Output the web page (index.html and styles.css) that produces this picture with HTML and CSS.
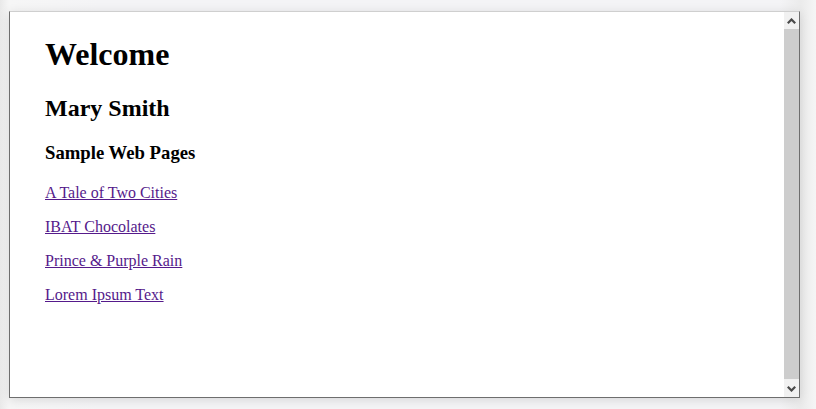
FILE: index.html
```html
<!DOCTYPE html>
<html>
<head>
<meta charset="utf-8">
<title>Welcome</title>
<link rel="stylesheet" href="styles.css">
</head>
<body>
<div class="frame">
  <div class="content">
    <h1>Welcome</h1>
    <h2>Mary Smith</h2>
    <h3>Sample Web Pages</h3>
    <p><a href="#">A Tale of Two Cities</a></p>
    <p><a href="#">IBAT Chocolates</a></p>
    <p><a href="#">Prince &amp; Purple Rain</a></p>
    <p><a href="#">Lorem Ipsum Text</a></p>
  </div>
  <div class="scrollbar">
    <div class="arrow">
      <svg width="9" height="6" viewBox="0 0 9 6"><path d="M0.8 5.2 L4.5 1.5 L8.2 5.2" fill="none" stroke="#4a4a4a" stroke-width="2.2"/></svg>
    </div>
    <div class="thumb"></div>
    <div class="arrow">
      <svg width="9" height="6" viewBox="0 0 9 6"><path d="M0.8 0.8 L4.5 4.5 L8.2 0.8" fill="none" stroke="#4a4a4a" stroke-width="2.2"/></svg>
    </div>
  </div>
</div>
</body>
</html>
```
FILE: styles.css
```css
html, body {
  margin: 0;
  height: 100%;
}
body {
  background: linear-gradient(to right, #e9e9e9 0px, #f6f6f6 9px, #f4f4f6 100px, #f4f4f6 780px, #ebebeb 801px, #f5f5f5 816px);
  padding: 11px 0 0 9px;
  box-sizing: border-box;
  overflow: hidden;
}
.frame {
  width: 791px;
  height: 387px;
  box-sizing: border-box;
  border: 1px solid #6e6e6e;
  border-top-color: #cfcfcf;
  background: #fff;
  display: flex;
  box-shadow: 0 2px 10px rgba(0, 0, 0, 0.12);
}
.content {
  flex: 1;
  padding: 3px 0 0 35px;
  font-family: "Liberation Serif", "Times New Roman", serif;
  color: #000;
}
.content h1 {
  font-size: 32px;
  margin: 21.44px 0;
}
.content h2 {
  font-size: 24px;
  margin: 19.92px 0;
}
.content h3 {
  font-size: 18.72px;
  margin: 18.72px 0 20px;
}
.content p {
  font-size: 16px;
  margin: 16px 0;
}
.content a {
  color: #551a8b;
}
.scrollbar {
  width: 15px;
  background: #f1f1f1;
  display: flex;
  flex-direction: column;
}
.arrow {
  height: 17px;
  display: flex;
  align-items: center;
  justify-content: center;
}
.thumb {
  flex: 1;
  background: #cdcdcd;
  margin: 0 0 1px 0;
}
```
